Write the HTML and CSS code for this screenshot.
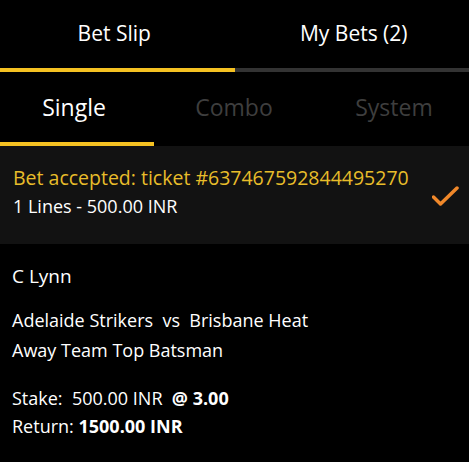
FILE: index.html
```html
<!DOCTYPE html>
<html lang="en">
<head>
    <meta charset="UTF-8">
    <meta name="viewport" content="width=device-width, initial-scale=1.0">
    <title>Bet Slip</title>
    <link rel="stylesheet" href="styles.css">
</head>
<body>
    <nav class="main-tabs">
        <div class="main-tab active">Bet Slip</div>
        <div class="main-tab">My Bets (2)</div>
    </nav>
    <nav class="sub-tabs">
        <div class="sub-tab active">Single</div>
        <div class="sub-tab">Combo</div>
        <div class="sub-tab">System</div>
    </nav>
    <section class="accepted">
        <div class="accepted-text">
            <div class="ticket">Bet accepted: ticket #637467592844495270</div>
            <div class="lines">1 Lines - 500.00 INR</div>
        </div>
        <svg class="check" width="28" height="22" viewBox="0 0 28 22">
            <path d="M1.5 12 L8.5 19 L25 3" fill="none" stroke="#f0882a" stroke-width="3.5" stroke-linecap="round" stroke-linejoin="round"/>
        </svg>
    </section>
    <section class="bet">
        <div class="selection">C Lynn</div>
        <div class="event">Adelaide Strikers &nbsp;vs &nbsp;Brisbane Heat</div>
        <div class="market">Away Team Top Batsman</div>
        <div class="stake">Stake: &nbsp;500.00 INR &nbsp;<b>@ 3.00</b></div>
        <div class="return">Return: <b>1500.00 INR</b></div>
    </section>
</body>
</html>
```

FILE: styles.css
```css
body {
    margin: 0;
    background-color: #000;
    color: #fff;
    font-family: "Open Sans", "Liberation Sans", sans-serif;
    overflow: hidden;
}

.main-tabs {
    display: flex;
}

.main-tab {
    flex: 0 0 50%;
    box-sizing: border-box;
    height: 72px;
    line-height: 66px;
    text-align: center;
    font-size: 21px;
    border-bottom: 4px solid #333;
}

.main-tab.active {
    padding-right: 6px;
    border-bottom-color: #f5c122;
}

.main-tab + .main-tab {
    padding-left: 4px;
}

.sub-tabs {
    display: flex;
}

.sub-tab {
    position: relative;
    flex: 0 0 148px;
    margin-right: 12px;
    height: 74px;
    line-height: 70px;
    text-align: center;
    font-size: 23px;
    color: #3e3e3e;
}

.sub-tab.active {
    color: #fff;
}

.sub-tab.active::after {
    content: "";
    position: absolute;
    left: 0;
    bottom: 0;
    width: 154px;
    height: 4px;
    background-color: #f5c122;
}

.accepted {
    display: flex;
    justify-content: space-between;
    height: 80px;
    padding: 18px 9px 0 13px;
    background-color: #121212;
}

.ticket {
    color: #e8bd2a;
    font-size: 19.5px;
    line-height: 28px;
}

.lines {
    font-size: 18px;
    line-height: 28px;
}

.check {
    margin-top: 21px;
}

.bet {
    padding: 17px 12px;
    font-size: 18px;
    line-height: 30px;
}

.selection {
    font-size: 19px;
    margin-bottom: 14px;
}

.stake {
    margin-top: 19px;
    line-height: 28px;
}

.return {
    line-height: 28px;
}
```
